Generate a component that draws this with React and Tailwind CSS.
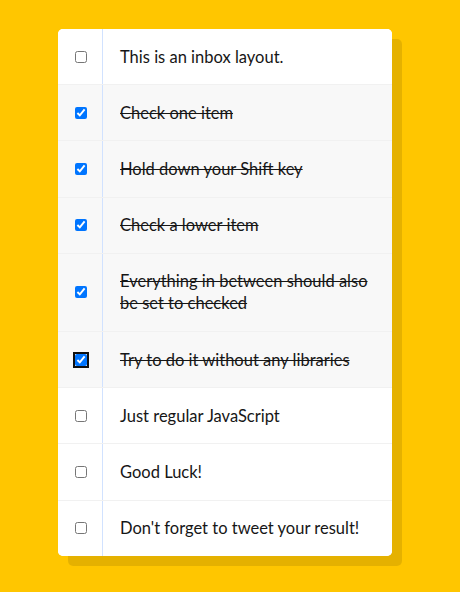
import { useState } from "react";

const items = [
  { text: "This is an inbox layout.", checked: false },
  { text: "Check one item", checked: true },
  { text: "Hold down your Shift key", checked: true },
  { text: "Check a lower item", checked: true },
  { text: "Everything in between should also be set to checked", checked: true },
  { text: "Try to do it without any libraries", checked: true, focused: true },
  { text: "Just regular JavaScript", checked: false },
  { text: "Good Luck!", checked: false },
  { text: "Don't forget to tweet your result!", checked: false },
];

export default function App() {
  const [checks, setChecks] = useState(items.map((i) => i.checked));

  function toggle(idx) {
    setChecks((prev) => prev.map((c, i) => (i === idx ? !c : c)));
  }

  return (
    <div className="min-h-[592px] bg-[#ffc600] pt-[29px] pl-[58px] font-['Lato',sans-serif]">
      <div className="w-[334px] overflow-hidden rounded-[5px] bg-white shadow-[10px_10px_0_rgba(0,0,0,0.1)]">
        {items.map((item, idx) => (
          <div
            key={idx}
            className={`flex items-center border-b border-[#f1f1f1] last:border-b-0 ${
              checks[idx] ? "bg-[#f8f8f8]" : "bg-white"
            }`}
          >
            <div className="flex w-[44px] shrink-0 justify-center pl-[1px]">
              <input
                type="checkbox"
                checked={checks[idx]}
                onChange={() => toggle(idx)}
                className={`h-[12px] w-[12px] ${
                  item.focused ? "rounded-[2px] outline-2 outline-[#101010]" : ""
                }`}
              />
            </div>
            <p
              className={`flex-1 self-stretch border-l border-[#d1e2ff] py-[16.6px] pl-[17px] pr-[17px] text-[16.5px] leading-[22px] text-[#161616] ${
                checks[idx] ? "line-through" : ""
              }`}
            >
              {item.text}
            </p>
          </div>
        ))}
      </div>
    </div>
  );
}
